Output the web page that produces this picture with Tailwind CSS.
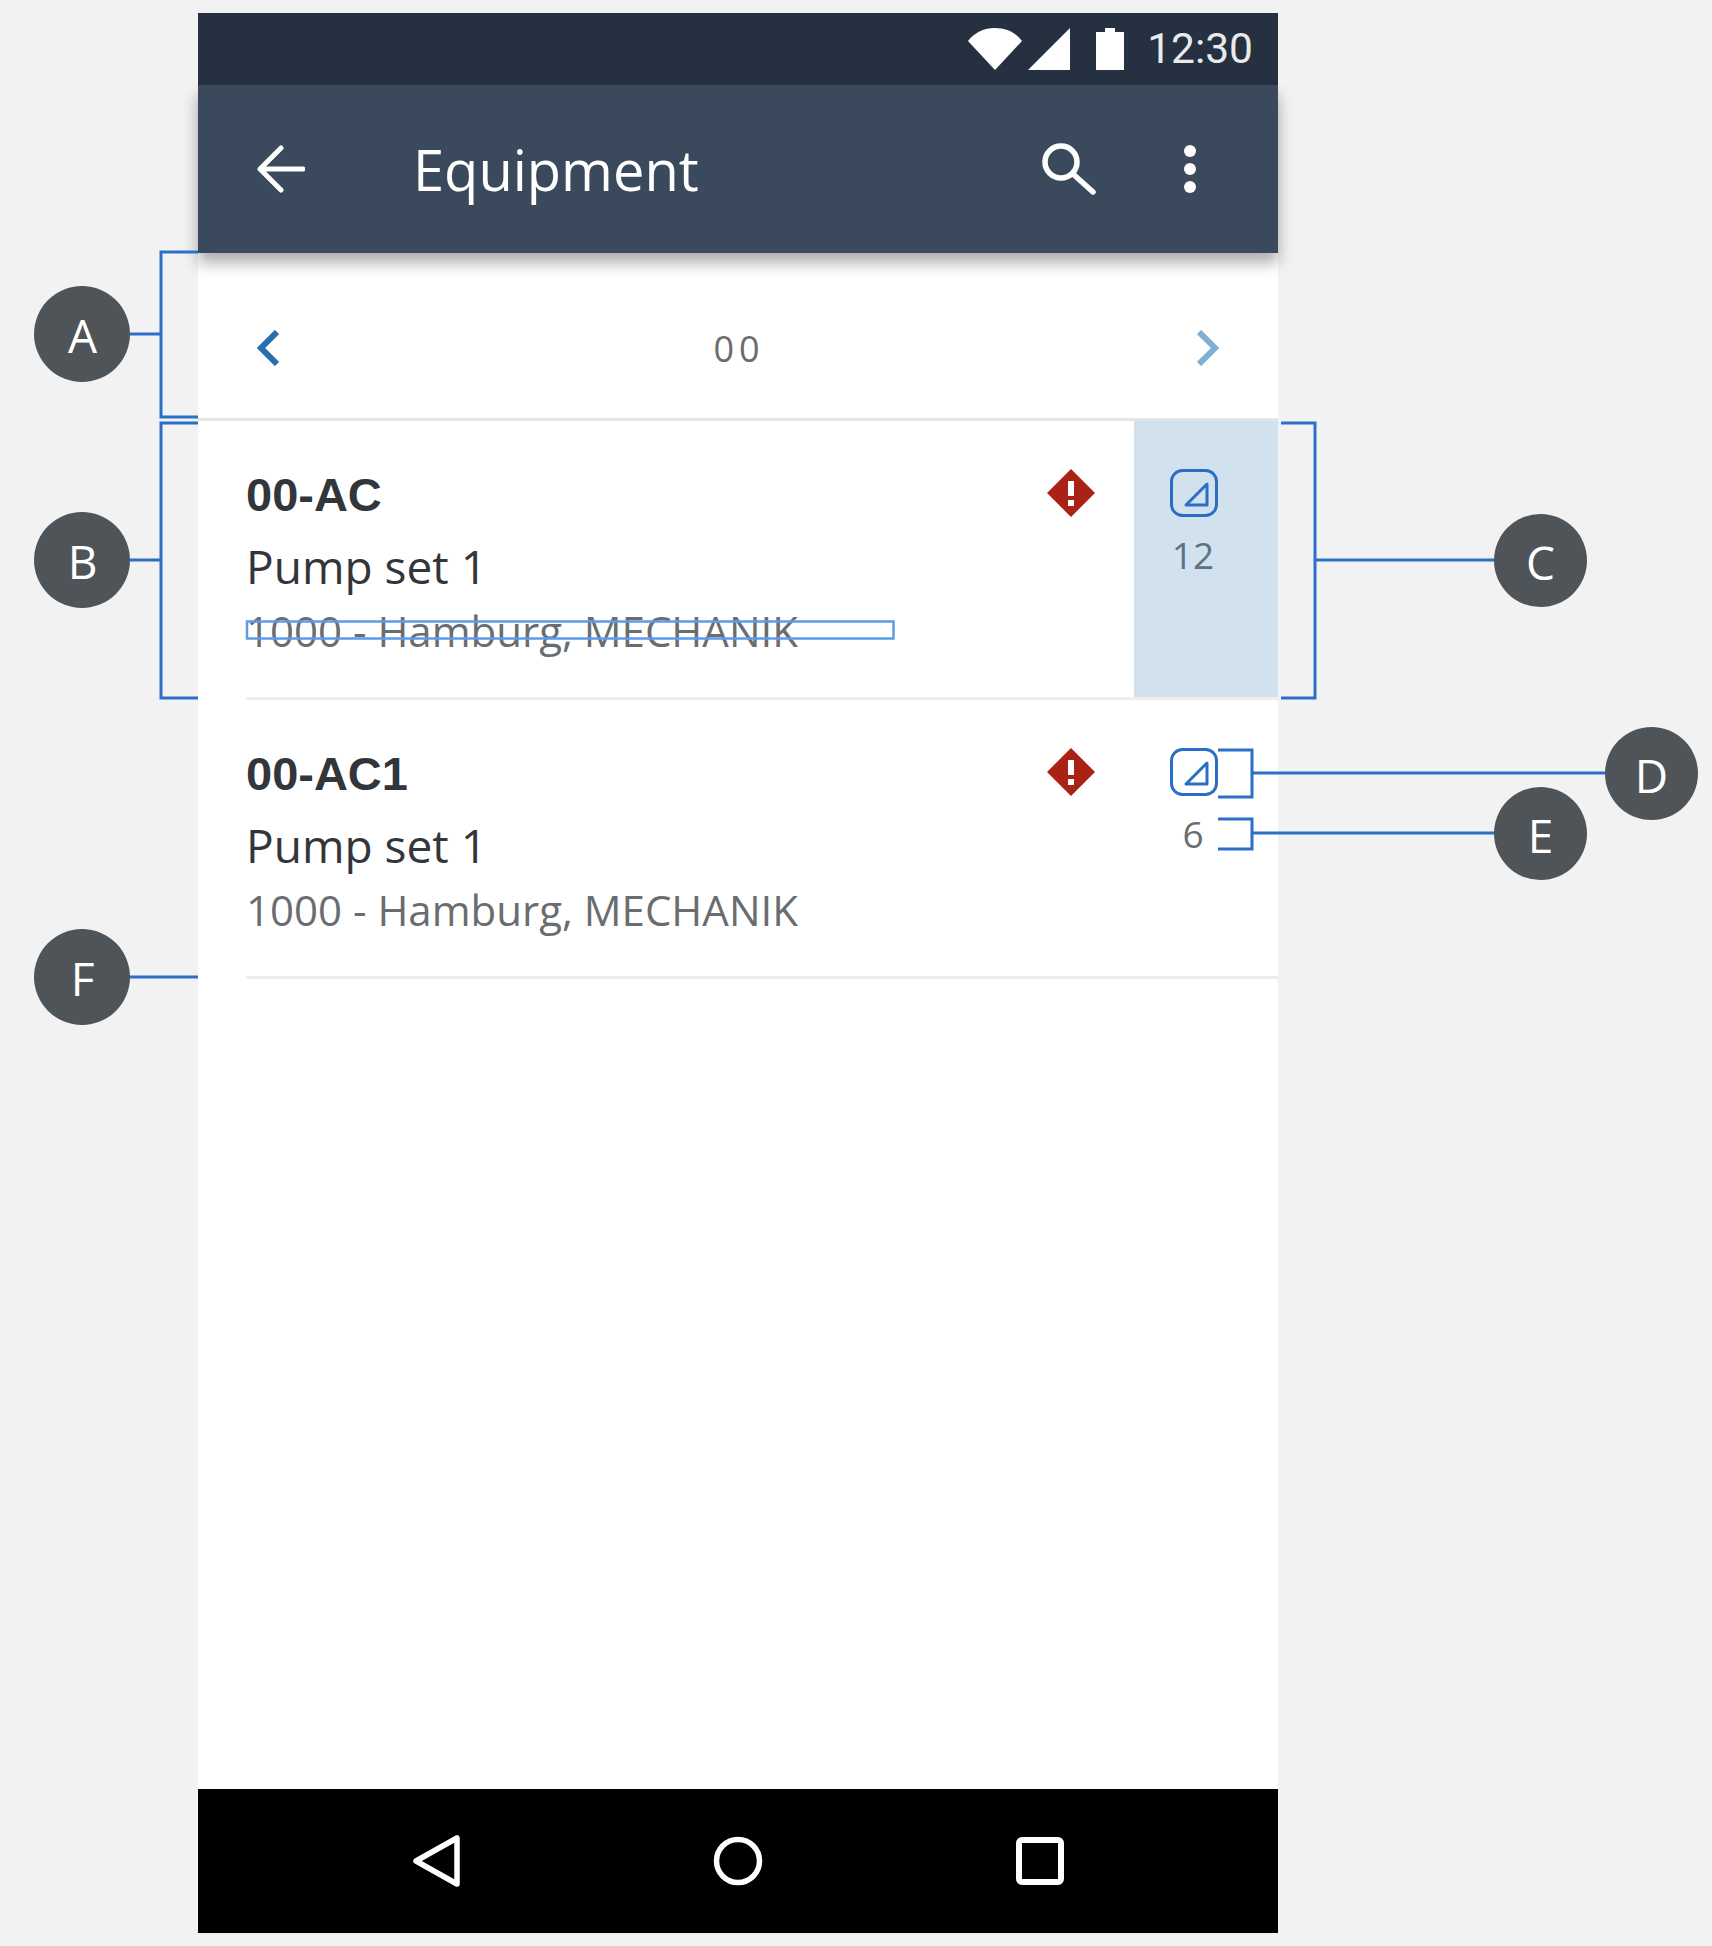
<!DOCTYPE html>
<html lang="en">
<head>
  <meta charset="UTF-8" />
  <title>Equipment</title>
  <script src="https://cdn.jsdelivr.net/npm/@tailwindcss/browser@4"></script>
</head>
<body class="bg-[#f2f2f2] font-['Open_Sans',sans-serif]">
  <div class="relative w-[1712px] h-[1946px] pt-[13px] pl-[198px]">
    <!-- phone -->
    <div class="w-[1080px] h-[1920px] bg-white flex flex-col">
      <!-- status bar -->
      <div class="h-[72px] shrink-0 bg-[#253140] flex items-center justify-end pr-[25px]">
        <svg class="w-[54px] h-[42px] mr-[6px]" viewBox="0 0 54 42"><path d="M0 13C7 4 16 0 27 0s20 4 27 13L27 42Z" fill="#fff"/></svg>
        <svg class="w-[42px] h-[42px] mr-[26px]" viewBox="0 0 42 42"><path d="M42 0V42H0Z" fill="#fff"/></svg>
        <svg class="w-[28px] h-[42px] mr-[23px]" viewBox="0 0 28 42"><path d="M9 0h10v4h9v38H0V4h9Z" fill="#fff"/></svg>
        <span class="font-['Roboto',sans-serif] text-[42.5px] leading-none text-[#e8eaec]">12:30</span>
      </div>
      <!-- app bar -->
      <div class="relative z-10 h-[168px] shrink-0 bg-[#3a4a5c] shadow-[0_10px_14px_rgba(0,0,0,0.32)] flex items-center">
        <svg class="w-[48px] h-[48px] ml-[59px] mr-[108px]" viewBox="0 0 48 48" fill="none" stroke="#fff" stroke-width="5" stroke-linecap="round" stroke-linejoin="round"><path d="M46 24H4M24 3 3 24l21 21"/></svg>
        <span class="text-[56px] leading-none text-white flex-1">Equipment</span>
        <svg class="w-[54px] h-[52px] mr-[87px]" viewBox="0 0 54 52" fill="none" stroke="#fff" stroke-width="5.5" stroke-linecap="round"><circle cx="19" cy="19" r="16"/><path d="M31 31 51 49"/></svg>
        <svg class="w-[14px] h-[48px] mr-[81px]" viewBox="0 0 14 48" fill="#fff"><circle cx="7" cy="6" r="6"/><circle cx="7" cy="24" r="6"/><circle cx="7" cy="42" r="6"/></svg>
      </div>
      <!-- pager -->
      <div class="h-[168px] shrink-0 border-b-[3px] border-[#e5e5e5] flex items-center justify-between pl-[59px] pr-[59px] pt-[24px]">
        <svg class="w-[22px] h-[36px]" viewBox="0 0 22 36" fill="none" stroke="#2a6fad" stroke-width="6"><path d="M20 2 4 18l16 16"/></svg>
        <span class="text-[36px] leading-none text-[#6a6d70] tracking-[5px] pl-[2px] pt-[2px]">00</span>
        <svg class="w-[22px] h-[36px]" viewBox="0 0 22 36" fill="none" stroke="#7fb0d3" stroke-width="6"><path d="M2 2l16 16L2 34"/></svg>
      </div>
      <!-- item 1 -->
      <div class="h-[279px] shrink-0 pl-[48px]">
        <div class="h-full border-b-[3px] border-[#eeeeee] flex">
          <div class="flex-1 pt-[48px] relative">
            <p class="font-['Liberation_Sans',sans-serif] font-bold text-[47px] leading-[52px] text-[#32363a]">00-AC</p>
            <p class="text-[46px] leading-[52px] mt-[19px] text-[#32363a]">Pump set 1</p>
            <p class="text-[42px] leading-[48px] mt-[15px] text-[#6a6d70]">1000 - Hamburg, MECHANIK</p>
            <svg class="absolute left-[801px] top-[48px] w-[48px] h-[48px]" viewBox="0 0 48 48"><path d="M24 0 48 24 24 48 0 24Z" fill="#aa2115"/><path d="M21 12h6v15h-6ZM21 31h6v6h-6Z" fill="#fff"/></svg>
          </div>
          <div class="w-[144px] bg-[#d1e2ee] pt-[48px] pl-[36px]">
            <div class="w-[48px] flex flex-col items-center">
              <svg class="w-[48px] h-[48px] shrink-0" viewBox="0 0 48 48" fill="none" stroke="#2b6fc4" stroke-width="3" stroke-linejoin="round"><rect x="1.5" y="1.5" width="45" height="45" rx="11"/><path d="M37 15V36H16Z"/></svg>
              <span class="text-[37px] leading-none mt-[19px] -ml-[2px] text-[#5f7282]">12</span>
            </div>
          </div>
        </div>
      </div>
      <!-- item 2 -->
      <div class="h-[279px] shrink-0 pl-[48px]">
        <div class="h-full border-b-[3px] border-[#eeeeee] flex">
          <div class="flex-1 pt-[48px] relative">
            <p class="font-['Liberation_Sans',sans-serif] font-bold text-[47px] leading-[52px] text-[#32363a]">00-AC1</p>
            <p class="text-[46px] leading-[52px] mt-[19px] text-[#32363a]">Pump set 1</p>
            <p class="text-[42px] leading-[48px] mt-[15px] text-[#6a6d70]">1000 - Hamburg, MECHANIK</p>
            <svg class="absolute left-[801px] top-[48px] w-[48px] h-[48px]" viewBox="0 0 48 48"><path d="M24 0 48 24 24 48 0 24Z" fill="#aa2115"/><path d="M21 12h6v15h-6ZM21 31h6v6h-6Z" fill="#fff"/></svg>
          </div>
          <div class="w-[144px] pt-[48px] pl-[36px]">
            <div class="w-[48px] flex flex-col items-center">
              <svg class="w-[48px] h-[48px] shrink-0" viewBox="0 0 48 48" fill="none" stroke="#2b6fc4" stroke-width="3" stroke-linejoin="round"><rect x="1.5" y="1.5" width="45" height="45" rx="11"/><path d="M37 15V36H16Z"/></svg>
              <span class="text-[37px] leading-none mt-[19px] -ml-[2px] text-[#6a6d70]">6</span>
            </div>
          </div>
        </div>
      </div>
      <div class="flex-1"></div>
      <!-- android nav -->
      <div class="h-[144px] shrink-0 bg-black relative flex items-center">
        <svg class="w-[48px] h-[52px] ml-[215px]" viewBox="0 0 48 52" fill="none" stroke="#fff" stroke-width="5.5" stroke-linejoin="round"><path d="M44 3V49L3 26Z"/></svg>
        <svg class="w-[50px] h-[50px] ml-[252px]" viewBox="0 0 50 50" fill="none" stroke="#fff" stroke-width="5.5"><circle cx="25" cy="25" r="21.5"/></svg>
        <svg class="w-[48px] h-[48px] ml-[253px]" viewBox="0 0 48 48" fill="none" stroke="#fff" stroke-width="6"><rect x="3" y="3" width="42" height="42" rx="3"/></svg>
      </div>
    </div>

    <!-- callout lines -->
    <svg class="absolute left-0 top-0 w-[1712px] h-[1946px] pointer-events-none z-20" viewBox="0 0 1712 1946" fill="none" stroke="#2b6fc9" stroke-width="3">
      <path d="M198 252H161V417H198M130 334H161"/>
      <path d="M198 423H161V698H198M130 560H161"/>
      <path d="M130 977H198"/>
      <path d="M1281 423H1315V698H1281M1315 560H1494"/>
      <path d="M1218 750H1252V797H1218M1252 773H1605"/>
      <path d="M1218 819H1252V849H1218M1252 833H1494"/>
      <rect x="247" y="621.5" width="646.5" height="17" stroke="#5c9ceb" stroke-width="2.5"/>
    </svg>

    <!-- callout badges -->
    <div class="absolute z-30 left-[34px] top-[286px] w-[96px] h-[96px] pt-[3px] pl-[1px] rounded-full bg-[#4f5459] text-white text-[46px] flex items-center justify-center">A</div>
    <div class="absolute z-30 left-[34px] top-[512px] w-[96px] h-[96px] pt-[3px] pl-[1px] rounded-full bg-[#4f5459] text-white text-[46px] flex items-center justify-center">B</div>
    <div class="absolute z-30 left-[34px] top-[929px] w-[96px] h-[96px] pt-[3px] pl-[1px] rounded-full bg-[#4f5459] text-white text-[46px] flex items-center justify-center">F</div>
    <div class="absolute z-30 left-[1494px] top-[514px] w-[93px] h-[93px] pt-[3px] rounded-full bg-[#4f5459] text-white text-[46px] flex items-center justify-center">C</div>
    <div class="absolute z-30 left-[1605px] top-[727px] w-[93px] h-[93px] pt-[3px] rounded-full bg-[#4f5459] text-white text-[46px] flex items-center justify-center">D</div>
    <div class="absolute z-30 left-[1494px] top-[787px] w-[93px] h-[93px] pt-[3px] rounded-full bg-[#4f5459] text-white text-[46px] flex items-center justify-center">E</div>
  </div>
</body>
</html>
